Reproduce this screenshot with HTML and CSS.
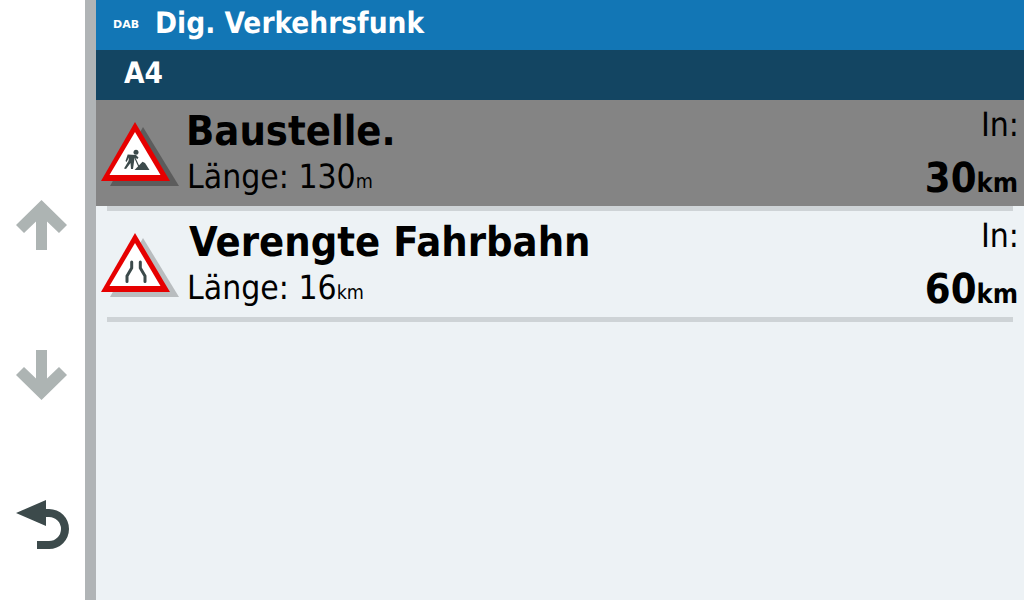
FILE: index.html
```html
<!DOCTYPE html>
<html lang="de">
<head>
<meta charset="utf-8">
<title>Dig. Verkehrsfunk</title>
<link rel="stylesheet" href="styles.css">
</head>
<body>
<div class="app">
  <nav class="side">
    <svg class="nav-icon up" width="52" height="50" viewBox="0 0 52 50"><path class="grey" d="M25.500 0 L51 25 L43 33 L31 21.500 L31 50 L20 50 L20 21.500 L8 33 L0 25 Z"/></svg>
    <svg class="nav-icon down" width="52" height="50" viewBox="0 0 52 50"><path class="grey" d="M25.500 50 L51 25 L43 17 L31 28.500 L31 0 L20 0 L20 28.500 L8 17 L0 25 Z"/></svg>
    <svg class="nav-icon back" width="54" height="50" viewBox="0 0 54 50"><path class="dark" d="M0 13 L30 0 L30 9 L33 9 A20 20 0 0 1 33 49 L21 49 L21 41 L33 41 A12 12 0 0 0 33 17 L30 17 L30 26 Z"/></svg>
  </nav>
  <div class="rail"></div>
  <main class="main">
    <header class="title"><span class="dab">DAB</span><span class="title-text">Dig. Verkehrsfunk</span></header>
    <div class="road">A4</div>
    <section class="msg selected">
      <svg class="sign" width="81" height="66" viewBox="0 0 81 66">
        <path class="shadow" d="M44 6 L80 65 L11 65 Z"/>
        <path class="tri-out" d="M36 1 L71 60 L2 60 Z"/>
        <path class="tri-in" d="M36 11 L61.500 54 L10.500 54 Z"/>
        <g class="work">
          <circle cx="37" cy="31.300" r="2.500"/>
          <path d="M28.700 33.500 L37 34 L39.500 36.500 L38.500 38 L35.500 36.500 L35 41 L34 48 L32 48 L31.500 42 L27 48 L25 47.500 L29.500 40 L30 36.500 L27.500 41 L26.500 40 Z"/>
          <path class="workline" d="M35.500 36 L40.500 47"/>
          <path d="M35.500 49 L43.500 40.700 L46 42 L50.500 49 Z"/>
        </g>
      </svg>
      <div class="body first">
        <div class="name">Baustelle.</div>
        <div class="len">Länge: 130<small>m</small></div>
      </div>
      <div class="dist">
        <div class="in">In:</div>
        <div class="val">30<small>km</small></div>
      </div>
    </section>
    <div class="rule"></div>
    <section class="msg">
      <svg class="sign" width="81" height="66" viewBox="0 0 81 66">
        <path class="shadow" d="M44 6 L80 65 L11 65 Z"/>
        <path class="tri-out" d="M36 1 L71 60 L2 60 Z"/>
        <path class="tri-in" d="M36 11 L61.500 54 L10.500 54 Z"/>
        <path class="narrow" d="M32.700 30 L32.700 36 L28 44 L28 49.500 M41.300 30 L41.300 36 L46 44 L46 49.500"/>
      </svg>
      <div class="body second">
        <div class="name">Verengte Fahrbahn</div>
        <div class="len">Länge: 16<small>km</small></div>
      </div>
      <div class="dist">
        <div class="in">In:</div>
        <div class="val">60<small>km</small></div>
      </div>
    </section>
    <div class="rule"></div>
  </main>
</div>
</body>
</html>
```

FILE: styles.css
```css
* { box-sizing: border-box; }
html, body { margin: 0; height: 100%; overflow: hidden; }
body { font-family: "DejaVu Sans Condensed", "DejaVu Sans", sans-serif; color: #000; background: #fff; text-rendering: geometricPrecision; }
.app { display: flex; width: 1024px; height: 600px; }
.side { width: 85px; background: #fff; position: relative; }
.nav-icon { position: absolute; left: 16px; }
.up { top: 200px; }
.down { top: 350px; }
.back { top: 500px; }
.grey { fill: #adb4b3; }
.dark { fill: #3c4a4b; }
.rail { width: 11px; background: #b0b4b6; }
.main { flex: 1; background: #edf2f5; display: flex; flex-direction: column; }
.title { height: 50px; background: #1276b5; color: #fff; display: flex; align-items: center; font-weight: 700; padding-bottom: 5px; }
.dab { font-family: "DejaVu Sans", sans-serif; font-size: 11px; width: 59px; padding: 4px 0 0 17px; }
.title-text { font-size: 29.500px; }
.road { height: 50px; background: #134562; color: #fff; font-weight: 700; font-size: 29.500px; line-height: 47px; padding-left: 28px; }
.msg { height: 106px; display: flex; position: relative; }
.msg.selected { background: #848484; }
.sign { margin: 21px 0 0 3px; flex: none; }
.shadow { fill: #000; opacity: .22; }
.selected .shadow { opacity: .3; }
.tri-out { fill: #e60000; }
.tri-in { fill: #fff; }
.work { fill: #3c4a4b; }
.workline { stroke: #3c4a4b; stroke-width: 1.200; fill: none; }
.narrow { fill: none; stroke: #3c4a4b; stroke-width: 3; stroke-linecap: round; stroke-linejoin: round; }
.body { flex: 1; padding-top: 4px; }
.body.first { margin-left: 6px; }
.body.second { margin-left: 9px; }
.name { font-size: 41.300px; font-weight: 700; line-height: 54px; }
.len { font-size: 33.400px; line-height: 38px; }
.first .len { margin-left: 1px; }
.second .len { margin-left: -2px; }
.len small { font-size: 19.500px; }
.dist { width: 200px; padding-right: 6px; text-align: right; }
.in { font-size: 33.400px; line-height: 50px; margin-right: -1px; }
.val { font-size: 41.300px; font-weight: 700; line-height: 56px; }
.val small { font-size: 27px; }
.rule { height: 5px; margin: 0 11px; background: #ced3d6; }
```
